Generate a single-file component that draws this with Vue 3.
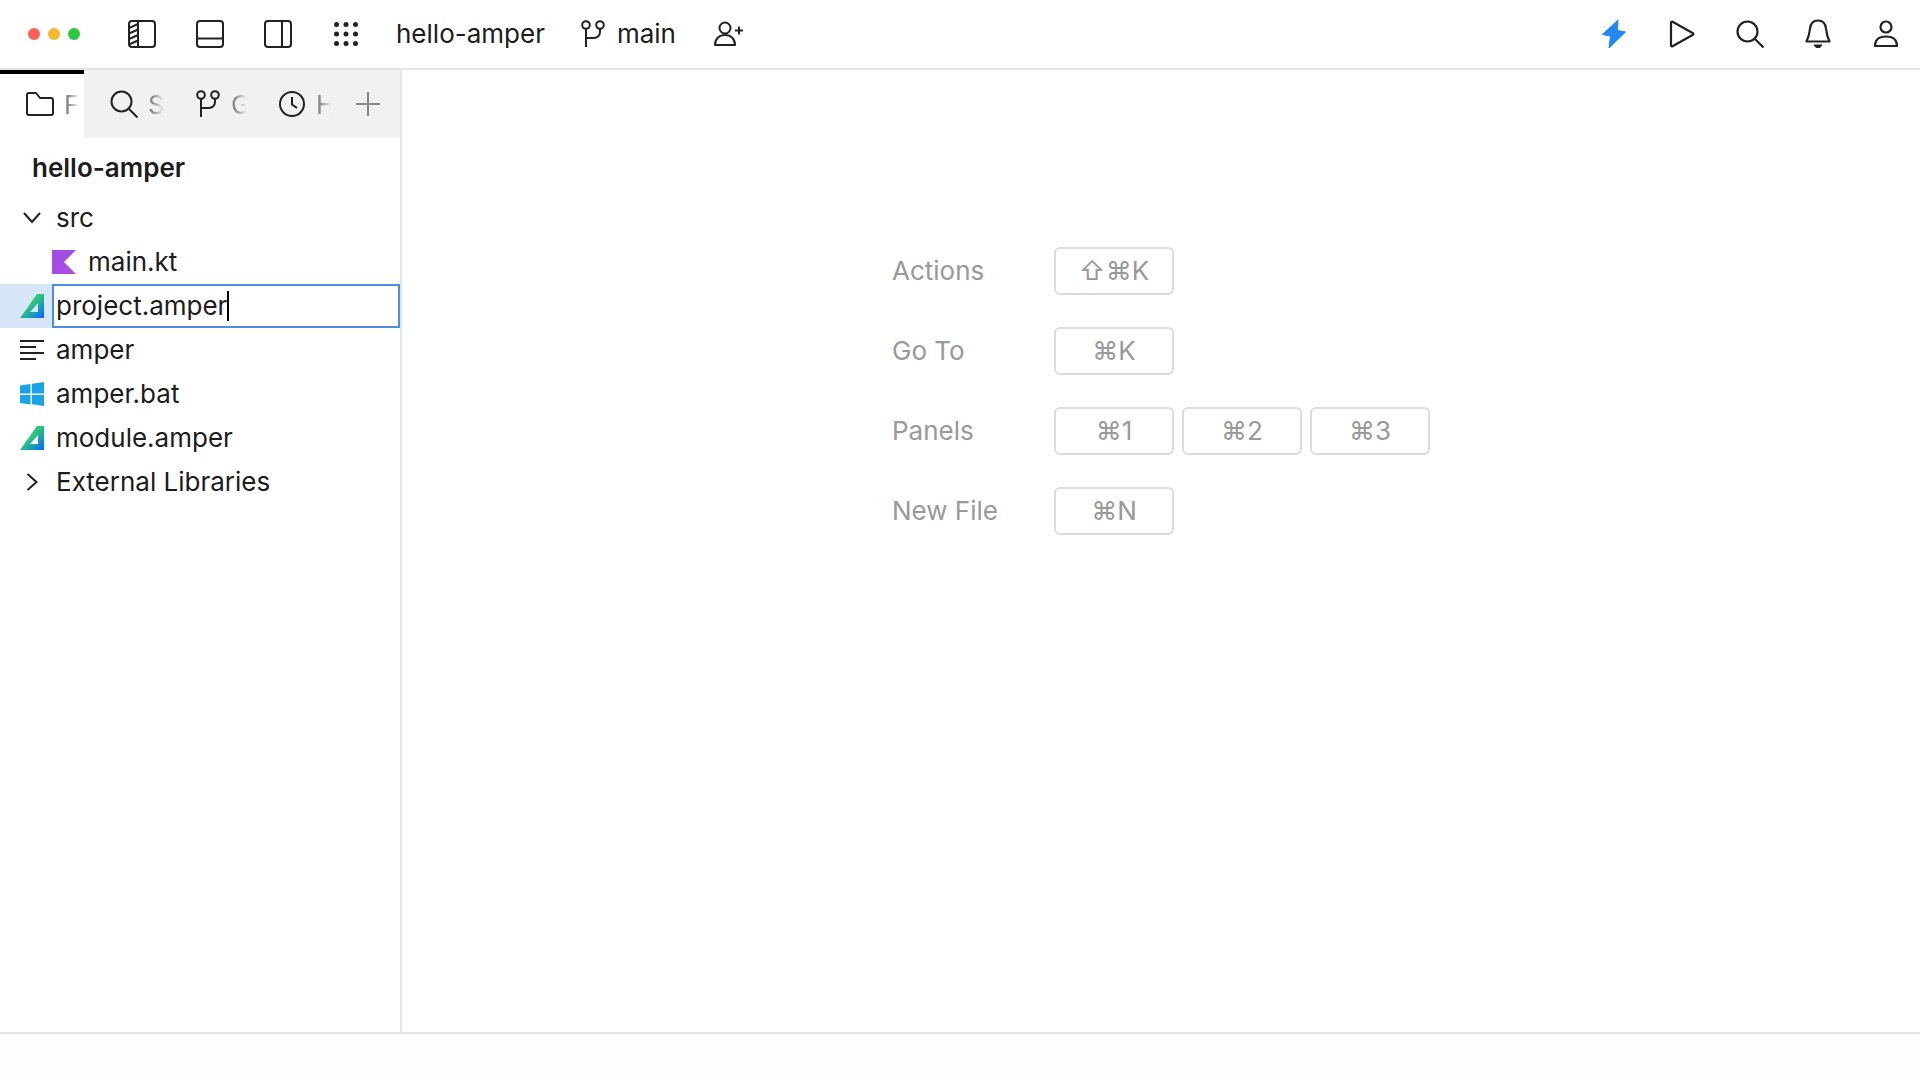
<script setup>
const shortcuts = [
  { label: 'Actions', keys: [['⇧⌘K']] },
  { label: 'Go To', keys: [['⌘K']] },
  { label: 'Panels', keys: [['⌘1'], ['⌘2'], ['⌘3']] },
  { label: 'New File', keys: [['⌘N']] },
]
const tabs = [
  { id: 'folder', label: 'Files' },
  { id: 'search', label: 'Search' },
  { id: 'git', label: 'Git' },
  { id: 'clock', label: 'History' },
]
</script>

<template>
  <div class="window">
    <header class="topbar">
      <div class="lights"><i class="r"></i><i class="y"></i><i class="g"></i></div>
      <button class="ib"><svg width="28" height="28" viewBox="0 0 28 28" fill="none" stroke="#222" stroke-width="2"><rect x="1" y="1" width="26" height="26" rx="3"/><path d="M10 1v26M1 8l9-4M1 13.500l9-4M1 19l9-4M1 24.500l9-4"/></svg></button>
      <button class="ib"><svg width="28" height="28" viewBox="0 0 28 28" fill="none" stroke="#222" stroke-width="2"><rect x="1" y="1" width="26" height="26" rx="3"/><path d="M1 18.500h26"/></svg></button>
      <button class="ib"><svg width="28" height="28" viewBox="0 0 28 28" fill="none" stroke="#222" stroke-width="2"><rect x="1" y="1" width="26" height="26" rx="3"/><path d="M18 1v26"/></svg></button>
      <button class="ib"><svg width="26" height="26" viewBox="0 0 26 26" fill="#222"><circle cx="3.500" cy="3.500" r="2.500"/><circle cx="13" cy="3.500" r="2.500"/><circle cx="22.500" cy="3.500" r="2.500"/><circle cx="3.500" cy="13" r="2.500"/><circle cx="13" cy="13" r="2.500"/><circle cx="22.500" cy="13" r="2.500"/><circle cx="3.500" cy="22.500" r="2.500"/><circle cx="13" cy="22.500" r="2.500"/><circle cx="22.500" cy="22.500" r="2.500"/></svg></button>
      <span class="project">hello-amper</span>
      <span class="branch">
        <svg width="24" height="28" viewBox="0 0 24 28" fill="none" stroke="#222" stroke-width="2"><circle cx="5" cy="5" r="3.800"/><circle cx="19" cy="5" r="3.800"/><path d="M5 9v18M19 9v3a6 6 0 0 1-6 6H5"/></svg>
        main
      </span>
      <svg class="invite" width="30" height="26" viewBox="0 0 30 26" fill="none" stroke="#222" stroke-width="2"><circle cx="11" cy="7" r="5.500"/><path d="M1 24c0-6 4-10 10-10s10 4 10 10z" stroke-linejoin="round"/><path d="M21 9.500h8M25 5.500v8"/></svg>
      <div class="spacer"></div>
      <button class="ib"><svg width="26" height="30" viewBox="0 0 26 30"><path d="M17 1 1.500 15.500 9.500 17 8 29 24.500 13 16.500 11.500z" fill="#2188ee" stroke="#2188ee" stroke-width="1" stroke-linejoin="round"/></svg></button>
      <button class="ib"><svg width="26" height="28" viewBox="0 0 26 28" fill="none" stroke="#222" stroke-width="2.200" stroke-linejoin="round"><path d="M2 2.500v23a1 1 0 0 0 1.500.8L24 14.800a1 1 0 0 0 0-1.600L3.500 1.700A1 1 0 0 0 2 2.500z"/></svg></button>
      <button class="ib"><svg width="28" height="28" viewBox="0 0 28 28" fill="none" stroke="#222" stroke-width="2.200"><circle cx="11.500" cy="11.500" r="10"/><path d="M18.500 18.500 27.500 27.500"/></svg></button>
      <button class="ib"><svg width="26" height="30" viewBox="0 0 26 30" fill="none" stroke="#222" stroke-width="2.200" stroke-linejoin="round"><path d="M13 1.500c-5 0-7.500 3.500-8 8-.5 5-1.500 9-3.500 13h23c-2-4-3-8-3.500-13-.5-4.500-3-8-8-8z"/><path d="M9 26h8l-2 2.500h-4z" fill="#222" stroke-width="1"/></svg></button>
      <button class="ib"><svg width="26" height="28" viewBox="0 0 26 28" fill="none" stroke="#222" stroke-width="2.200" stroke-linejoin="round"><circle cx="13" cy="7" r="5.500"/><path d="M2 26c0-6.500 4.500-9.500 11-9.500s11 3 11 9.500z"/></svg></button>
    </header>

    <div class="body">
      <aside class="sidebar">
        <nav class="tabs">
          <div v-for="(t, i) in tabs" :key="t.id" class="tab" :class="[t.id, { active: i === 0 }]">
            <svg v-if="t.id === 'folder'" width="30" height="26" viewBox="0 0 30 26" fill="none" stroke="#222" stroke-width="2" stroke-linejoin="round"><path d="M2 4a2 2 0 0 1 2-2h7l4 5h11a2 2 0 0 1 2 2v13a2 2 0 0 1-2 2H4a2 2 0 0 1-2-2z"/></svg>
            <svg v-else-if="t.id === 'search'" width="28" height="28" viewBox="0 0 28 28" fill="none" stroke="#222" stroke-width="2"><circle cx="11.500" cy="11.500" r="10"/><path d="M18.500 18.500 27.500 27.500"/></svg>
            <svg v-else-if="t.id === 'git'" width="26" height="28" viewBox="0 0 24 28" fill="none" stroke="#222" stroke-width="2"><circle cx="5" cy="5" r="3.800"/><circle cx="19" cy="5" r="3.800"/><path d="M5 9v18M19 9v3a6 6 0 0 1-6 6H5"/></svg>
            <svg v-else width="28" height="28" viewBox="0 0 28 28" fill="none" stroke="#222" stroke-width="2"><circle cx="14" cy="14" r="12"/><path d="M14 7v7.500l5 3.500"/></svg>
            <span class="tab-label">{{ t.label }}</span>
          </div>
          <div class="add"><svg width="26" height="26" viewBox="0 0 26 26" stroke="#888" stroke-width="2"><path d="M13 1v24M1 13h24"/></svg></div>
        </nav>

        <h1 class="root">hello-amper</h1>

        <ul class="tree">
          <li class="row"><span class="ico"><svg width="18" height="12" viewBox="0 0 18 12" fill="none" stroke="#222" stroke-width="2"><path d="M1 1l8 9 8-9"/></svg></span><span class="name">src</span></li>
          <li class="row nested"><span class="ico"><svg width="24" height="24" viewBox="0 0 24 24"><defs><linearGradient id="kt" x1="0" y1="0" x2="1" y2="1"><stop offset="0" stop-color="#9b4ee8"/><stop offset="1" stop-color="#b04be0"/></linearGradient></defs><path d="M0 0h24L12 12l12 12H0z" fill="url(#kt)"/></svg></span><span class="name">main.kt</span></li>
          <li class="row editing">
            <span class="ico"><svg width="24" height="24" viewBox="0 0 24 24"><defs><linearGradient id="am1" x1="0" y1="0" x2="1" y2="1"><stop offset="0.450" stop-color="#2cc878"/><stop offset="0.950" stop-color="#0a6bff"/></linearGradient></defs><path fill-rule="evenodd" d="M24 0v24H0L17 0zM18 9 10 18h8z" fill="url(#am1)"/></svg></span>
            <div class="input"><span class="name">project.amper</span><i class="caret"></i></div>
          </li>
          <li class="row"><span class="ico"><svg width="24" height="22" viewBox="0 0 24 22" stroke="#222" stroke-width="2"><path d="M0 2h24M0 8h16M0 14h24M0 20h16"/></svg></span><span class="name">amper</span></li>
          <li class="row"><span class="ico"><svg width="24" height="24" viewBox="0 0 24 24" fill="#19a3e8"><path d="M0 3.500 10.500 2v9.500H0zM12 1.800 24 0v11.500H12zM0 13h10.500v9.500L0 21zM12 13h12v11l-12-1.800z"/></svg></span><span class="name">amper.bat</span></li>
          <li class="row"><span class="ico"><svg width="24" height="24" viewBox="0 0 24 24"><defs><linearGradient id="am2" x1="0" y1="0" x2="1" y2="1"><stop offset="0.450" stop-color="#2cc878"/><stop offset="0.950" stop-color="#0a6bff"/></linearGradient></defs><path fill-rule="evenodd" d="M24 0v24H0L17 0zM18 9 10 18h8z" fill="url(#am2)"/></svg></span><span class="name">module.amper</span></li>
          <li class="row"><span class="ico"><svg width="12" height="18" viewBox="0 0 12 18" fill="none" stroke="#222" stroke-width="2"><path d="M1.500 1l9 8-9 8"/></svg></span><span class="name">External Libraries</span></li>
        </ul>
      </aside>

      <main class="main">
        <div class="shortcuts">
          <div v-for="s in shortcuts" :key="s.label" class="sc-row">
            <span class="sc-label">{{ s.label }}</span>
            <div class="keys">
              <kbd v-for="k in s.keys" :key="k[0]" class="key"><span class="key-text">{{ k[0] }}</span></kbd>
            </div>
          </div>
        </div>
      </main>
    </div>

    <footer class="status"></footer>
  </div>
</template>

<style>
html, body { margin: 0; background: #fff; }
</style>

<style scoped>
.window {
  width: 1920px;
  height: 1080px;
  display: flex;
  flex-direction: column;
  overflow: hidden;
  background: #fff;
  color: #1c1c1c;
  font-family: Inter, "Noto Sans", sans-serif;
  font-size: 26px;
}
.topbar {
  height: 68px;
  flex: none;
  display: flex;
  align-items: center;
  border-bottom: 2px solid #e4e4e4;
}
.lights { width: 108px; flex: none; display: flex; gap: 8px; padding-left: 28px; box-sizing: border-box; }
.lights i { width: 12px; height: 12px; border-radius: 50%; }
.lights .r { background: #fb5f57; }
.lights .y { background: #f8b82e; }
.lights .g { background: #2cc840; }
.ib {
  width: 68px; height: 68px; flex: none;
  display: flex; align-items: center; justify-content: center;
  border: 0; padding: 0; background: none;
}
.project { margin-left: 16px; line-height: 32px; }
.branch { margin-left: 36px; display: flex; align-items: center; gap: 12px; line-height: 32px; }
.invite { margin-left: 38px; }
.spacer { flex: 1; }
.body { flex: 1; display: flex; min-height: 0; }
.sidebar {
  width: 402px; flex: none; box-sizing: border-box;
  border-right: 2px solid #e4e4e4;
}
.tabs { height: 68px; display: flex; background: #f1f1f1; position: relative; }
.tabs::before { content: ""; position: absolute; left: 0; top: 0; width: 84px; height: 4px; background: #000; }
.tab {
  width: 84px; flex: none; box-sizing: border-box;
  display: flex; align-items: center; gap: 10px;
  padding-left: 26px; overflow: hidden;
}
.tab svg { flex: none; }
.tab.active { background: #fff; padding-left: 25px; gap: 9px; }
.tab.git { padding-left: 27px; }
.tab-label {
  color: #888;
  width: 22px; flex: none; overflow: hidden;
  -webkit-mask-image: linear-gradient(to right, #000 20%, transparent 70%);
  mask-image: linear-gradient(to right, #000 20%, transparent 70%);
}
.add { flex: 1; display: flex; align-items: center; justify-content: center; }
.root { margin: 0; padding-left: 32px; font-size: 26px; font-weight: 600; line-height: 32px; padding-top: 14px; padding-bottom: 12px; }
.tree { list-style: none; margin: 0; padding: 0; }
.row { height: 44px; display: flex; align-items: center; padding-left: 20px; gap: 12px; }
.name { position: relative; top: -1px; }
.ico { width: 24px; height: 44px; display: flex; align-items: center; justify-content: center; flex: none; }
.nested { padding-left: 52px; }
.editing { background: linear-gradient(to right, #d6e6f7 52px, #fff 52px); gap: 8px; }
.input {
  flex: 1; height: 44px; box-sizing: border-box; display: flex; align-items: center;
  border: 2px solid #4a8fe0; padding-left: 2px; background: #fff;
}
.caret { width: 2px; height: 30px; background: #000; margin-left: 0; }
.main { flex: 1; padding: 177px 0 0 490px; box-sizing: border-box; }
.shortcuts { display: flex; flex-direction: column; gap: 32px; }
.sc-row { display: flex; align-items: center; height: 48px; }
.sc-label { width: 162px; color: #999; font-size: 26px; position: relative; top: -1px; }
.keys { display: flex; gap: 8px; }
.key {
  width: 120px; height: 48px; box-sizing: border-box;
  display: flex; align-items: center; justify-content: center;
  border: 2px solid #dcdcdc; border-radius: 6px;
  font: inherit; font-size: 26px; color: #999;
}
.key-text { position: relative; top: -1px; }
.status { height: 46px; flex: none; border-top: 2px solid #e4e4e4; background: #fefefe; }
</style>
